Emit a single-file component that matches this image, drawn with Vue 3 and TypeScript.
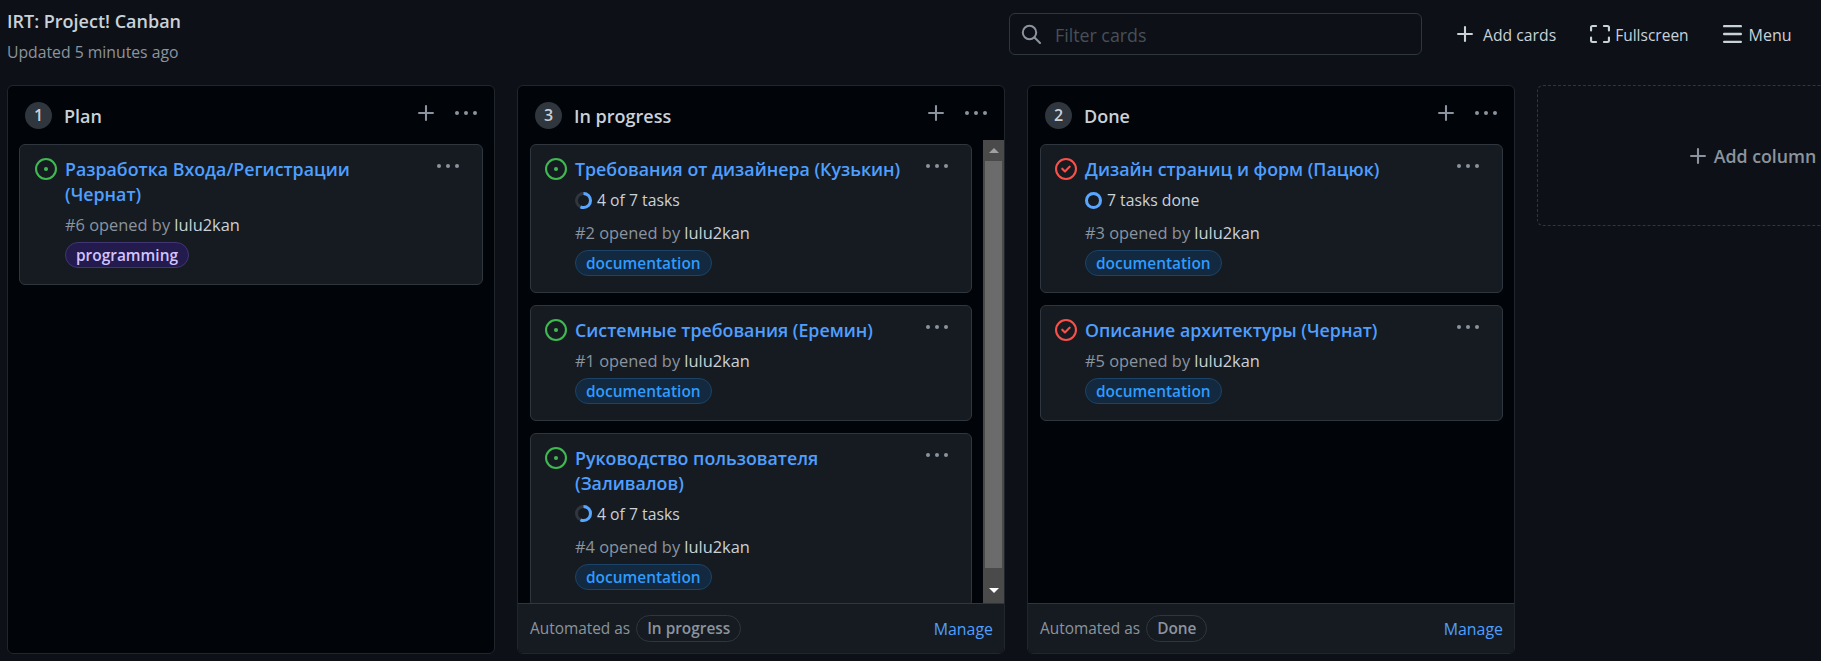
<script setup lang="ts">
interface Card {
  title: string[];
  num: number;
  tasks?: string;
  done?: boolean;
  closed?: boolean;
  label: "documentation" | "programming";
}
interface Column {
  name: string;
  count: number;
  cards: Card[];
  automated?: string;
  scroll?: boolean;
}
const columns: Column[] = [
  {
    name: "Plan",
    count: 1,
    cards: [
      { title: ["Разработка Входа/Регистрации", "(Чернат)"], num: 6, label: "programming" },
    ],
  },
  {
    name: "In progress",
    count: 3,
    automated: "In progress",
    scroll: true,
    cards: [
      { title: ["Требования от дизайнера (Кузькин)"], num: 2, tasks: "4 of 7 tasks", label: "documentation" },
      { title: ["Системные требования (Еремин)"], num: 1, label: "documentation" },
      { title: ["Руководство пользователя", "(Заливалов)"], num: 4, tasks: "4 of 7 tasks", label: "documentation" },
    ],
  },
  {
    name: "Done",
    count: 2,
    automated: "Done",
    cards: [
      { title: ["Дизайн страниц и форм (Пацюк)"], num: 3, tasks: "7 tasks done", done: true, closed: true, label: "documentation" },
      { title: ["Описание архитектуры (Чернат)"], num: 5, closed: true, label: "documentation" },
    ],
  },
];
</script>

<template>
  <div class="page">
    <header class="top">
      <div class="heading">
        <div class="project">IRT: Project! Canban</div>
        <div class="updated">Updated 5 minutes ago</div>
      </div>
      <div class="search">
        <svg width="20" height="20" viewBox="0 0 20 20" fill="none" stroke="#8b949e" stroke-width="2" stroke-linecap="round"><circle cx="8.5" cy="8.5" r="6.7" /><path d="M13.5 13.5 19 19" /></svg>
        <span class="placeholder">Filter cards</span>
      </div>
      <nav class="actions">
        <a class="action add">
          <svg width="16" height="16" viewBox="2 2 11.5 11.5" fill="#c9d1d9"><path d="M7.75 2a.75.75 0 0 1 .75.75V7h4.25a.75.75 0 0 1 0 1.5H8.5v4.25a.75.75 0 0 1-1.5 0V8.5H2.75a.75.75 0 0 1 0-1.5H7V2.75A.75.75 0 0 1 7.75 2Z" /></svg>
          <span>Add cards</span>
        </a>
        <a class="action full">
          <svg width="20" height="18" viewBox="1 1 14 14" preserveAspectRatio="none" fill="#c9d1d9"><path d="M1.75 10a.75.75 0 0 1 .75.75v2.5c0 .138.112.25.25.25h2.5a.75.75 0 0 1 0 1.5h-2.5A1.75 1.75 0 0 1 1 13.25v-2.5a.75.75 0 0 1 .75-.75Zm12.5 0a.75.75 0 0 1 .75.75v2.5A1.75 1.75 0 0 1 13.25 15h-2.5a.75.75 0 0 1 0-1.5h2.5a.25.25 0 0 0 .25-.25v-2.5a.75.75 0 0 1 .75-.75ZM2.75 2.5a.25.25 0 0 0-.25.25v2.5a.75.75 0 0 1-1.5 0v-2.5C1 1.784 1.784 1 2.75 1h2.5a.75.75 0 0 1 0 1.5ZM10 1.75a.75.75 0 0 1 .75-.75h2.5c.966 0 1.75.784 1.75 1.75v2.5a.75.75 0 0 1-1.5 0v-2.5a.25.25 0 0 0-.25-.25h-2.5a.75.75 0 0 1-.75-.75Z" /></svg>
          <span>Fullscreen</span>
        </a>
        <a class="action menu">
          <svg width="19" height="18" viewBox="1 2 14 11.5" preserveAspectRatio="none" fill="#c9d1d9"><path d="M1 2.75A.75.75 0 0 1 1.75 2h12.5a.75.75 0 0 1 0 1.5H1.75A.75.75 0 0 1 1 2.75Zm0 5A.75.75 0 0 1 1.75 7h12.5a.75.75 0 0 1 0 1.5H1.75A.75.75 0 0 1 1 7.75ZM1.75 12h12.5a.75.75 0 0 1 0 1.5H1.75a.75.75 0 0 1 0-1.5Z" /></svg>
          <span>Menu</span>
        </a>
      </nav>
    </header>

    <main class="board">
      <section v-for="col in columns" :key="col.name" class="column" :class="{ 'has-foot': col.automated }">
        <div class="col-head">
          <span class="count">{{ col.count }}</span>
          <span class="col-name">{{ col.name }}</span>
          <svg class="col-plus" width="16" height="16" viewBox="2 2 11.5 11.5" fill="#8b949e"><path d="M7.75 2a.75.75 0 0 1 .75.75V7h4.25a.75.75 0 0 1 0 1.5H8.5v4.25a.75.75 0 0 1-1.5 0V8.5H2.75a.75.75 0 0 1 0-1.5H7V2.75A.75.75 0 0 1 7.75 2Z" /></svg>
          <svg class="col-dots" width="22" height="4" viewBox="0 0 22 4" fill="#8b949e"><circle cx="2" cy="2" r="2" /><circle cx="11" cy="2" r="2" /><circle cx="20" cy="2" r="2" /></svg>
        </div>
        <div class="col-body">
          <div class="cards">
            <article v-for="card in col.cards" :key="card.num" class="card">
              <svg v-if="!card.closed" class="state" width="22" height="22" viewBox="0 0 16 16" fill="#3fb950"><path d="M8 9.5a1.5 1.5 0 1 0 0-3 1.5 1.5 0 0 0 0 3Z" /><path d="M8 0a8 8 0 1 1 0 16A8 8 0 0 1 8 0ZM1.5 8a6.5 6.5 0 1 0 13 0 6.5 6.5 0 0 0-13 0Z" /></svg>
              <svg v-else class="state" width="22" height="22" viewBox="0 0 16 16" fill="#f85149"><path d="M11.28 6.78a.75.75 0 0 0-1.06-1.06L7.25 8.69 5.78 7.22a.75.75 0 0 0-1.06 1.06l2 2a.75.75 0 0 0 1.06 0l3.5-3.5Z" /><path d="M16 8A8 8 0 1 1 0 8a8 8 0 0 1 16 0Zm-1.5 0a6.5 6.5 0 1 0-13 0 6.5 6.5 0 0 0 13 0Z" /></svg>
              <div class="card-main">
                <h3 class="card-title"><span v-for="line in card.title" :key="line" class="line">{{ line }}</span></h3>
                <div v-if="card.tasks" class="tasks">
                  <svg width="17" height="17" viewBox="0 0 17 17" fill="none" stroke-width="3">
                    <circle cx="8.5" cy="8.5" r="7" stroke="#30363d" />
                    <circle v-if="card.done" cx="8.5" cy="8.5" r="7" stroke="#58a6ff" />
                    <circle v-else cx="8.5" cy="8.5" r="7" stroke="#58a6ff" pathLength="7" stroke-dasharray="4 7" transform="rotate(-90 8.5 8.5)" />
                  </svg>
                  {{ card.tasks }}
                </div>
                <div class="meta">#{{ card.num }} opened by <span class="author">lulu2kan</span></div>
                <span class="label" :class="card.label">{{ card.label }}</span>
              </div>
              <svg class="card-dots" width="22" height="4" viewBox="0 0 22 4" fill="#8b949e"><circle cx="2" cy="2" r="2" /><circle cx="11" cy="2" r="2" /><circle cx="20" cy="2" r="2" /></svg>
            </article>
          </div>
          <div v-if="col.scroll" class="scrollbar">
            <div class="sb-btn"><i class="arrow up"></i></div>
            <div class="sb-thumb"></div>
            <div class="sb-end"><i class="arrow down"></i></div>
          </div>
        </div>
        <footer v-if="col.automated" class="col-foot">
          <span class="auto">Automated as</span>
          <span class="pill">{{ col.automated }}</span>
          <a class="manage">Manage</a>
        </footer>
      </section>
      <section class="add-col">
        <svg width="16" height="16" viewBox="2 2 11.5 11.5" fill="#8b949e"><path d="M7.75 2a.75.75 0 0 1 .75.75V7h4.25a.75.75 0 0 1 0 1.5H8.5v4.25a.75.75 0 0 1-1.5 0V8.5H2.75a.75.75 0 0 1 0-1.5H7V2.75A.75.75 0 0 1 7.75 2Z" /></svg>
        <span>Add column</span>
      </section>
    </main>
  </div>
</template>

<style>
html, body { margin: 0; background: #0d1117; overflow: hidden; }
</style>

<style scoped>
.page {
  width: 1821px;
  height: 661px;
  overflow: hidden;
  display: flex;
  flex-direction: column;
  background: #0d1117;
  color: #c9d1d9;
  font-family: "Open Sans", "Noto Sans", sans-serif;
  font-size: 16px;
  box-sizing: border-box;
}
.top {
  height: 85px;
  flex: none;
  display: flex;
  align-items: flex-start;
  padding-left: 7px;
  box-sizing: border-box;
}
.heading { width: 1002px; flex: none; padding-top: 9px; }
.project { font-size: 18px; font-weight: 600; line-height: 24px; color: #c9d1d9; white-space: nowrap; }
.updated { font-size: 15.75px; line-height: 24px; color: #8b949e; margin-top: 7px; }
.search {
  flex: none;
  width: 413px;
  height: 42px;
  margin-top: 13px;
  box-sizing: border-box;
  border: 1px solid #30363d;
  border-radius: 6px;
  display: flex;
  align-items: center;
  padding-left: 11px;
  gap: 14px;
  color: #484f58;
  font-size: 17.8px;
}
.placeholder { padding-top: 2px; }
.actions { display: flex; margin-top: 13px; height: 42px; align-items: center; margin-left: 35px; }
.action { display: flex; align-items: center; font-size: 15.75px; color: #c9d1d9; white-space: nowrap; }
.action span { padding-top: 2px; }
.add { gap: 10px; margin-right: 34px; }
.full { gap: 5px; margin-right: 34px; font-size: 15.5px; }
.menu { gap: 7px; font-size: 16px; }
.board { flex: 1; min-height: 0; display: flex; gap: 22px; padding: 0 0 7px 7px; }
.column {
  width: 488px;
  flex: none;
  box-sizing: border-box;
  border: 1px solid #21262d;
  border-radius: 6px;
  background: #010409;
  display: flex;
  flex-direction: column;
  overflow: hidden;
}
.col-head { flex: none; height: 58px; display: flex; align-items: center; padding: 0 17px; }
.count {
  width: 27px;
  height: 27px;
  border-radius: 50%;
  background: #30363d;
  color: #c9d1d9;
  font-size: 16px;
  font-weight: 600;
  display: flex;
  align-items: center;
  justify-content: center;
  margin-right: 12px;
}
.col-name { flex: 1; font-size: 18px; font-weight: 600; color: #c9d1d9; padding-top: 2px; }
.col-plus { margin-right: 21px; margin-top: -5px; }
.col-dots { margin-top: -5px; }
.col-body { flex: 1; min-height: 0; display: flex; }
.cards { flex: 1; min-width: 0; padding: 0 11px; display: flex; flex-direction: column; gap: 12px; overflow: hidden; }
.has-foot .cards { padding-left: 12px; }
.card {
  flex: none;
  display: flex;
  align-items: flex-start;
  background: #161b22;
  border: 1px solid #30363d;
  border-radius: 6px;
  padding: 12px 23px 16px 15px;
  box-sizing: border-box;
}
.has-foot .card { padding-left: 14px; }
.state { flex: none; margin-right: 8px; margin-top: 1px; }
.card-main { flex: 1; min-width: 0; }
.card-title { margin: 0; font-size: 17.8px; font-weight: 600; line-height: 24.5px; color: #4f9fff; }
.line { display: block; white-space: nowrap; }
.tasks { display: flex; align-items: center; gap: 5px; font-size: 15.75px; color: #c9d1d9; height: 24px; margin-top: 6.5px; }
.tasks + .meta { margin-top: 9px; }
.meta { font-size: 16.4px; line-height: 24px; color: #8b949e; margin-top: 6.5px; }
.author { color: #c9d1d9; }
.label {
  display: block;
  width: fit-content;
  box-sizing: border-box;
  margin-top: 5px;
  font-size: 15.45px;
  font-weight: 600;
  line-height: 24px;
  padding: 0 10px;
  border-radius: 13px;
  border: 1px solid;
}
.label.documentation { color: #2f9bff; background: #12293f; border-color: #1b4468; }
.label.programming { color: #d3c3ff; background: #231a4d; border-color: #413672; }
.card-dots { flex: none; margin-top: 7px; }
.scrollbar { flex: none; width: 21px; margin-top: -4px; background: #4a4a4a; display: flex; flex-direction: column; align-items: stretch; }
.sb-btn { height: 21px; display: flex; align-items: center; justify-content: center; }
.sb-thumb { flex: 1; margin: 0 2px; background: #6b6b6b; }
.sb-end { height: 35px; display: flex; justify-content: center; padding-top: 20px; box-sizing: border-box; }
.arrow { width: 0; height: 0; border-left: 5px solid transparent; border-right: 5px solid transparent; }
.arrow.up { border-bottom: 5px solid #a0a0a0; }
.arrow.down { border-top: 5px solid #ffffff; }
.col-foot {
  flex: none;
  height: 50px;
  box-sizing: border-box;
  border-top: 1px solid #30363d;
  background: #161b22;
  display: flex;
  align-items: center;
  padding: 0 11px 0 12px;
  font-size: 15.4px;
}
.auto { color: #8b949e; }
.pill {
  margin-left: 6px;
  height: 27px;
  box-sizing: border-box;
  border: 1px solid #30363d;
  border-radius: 14px;
  padding: 0 10px;
  display: flex;
  align-items: center;
  font-weight: 600;
  color: #8b949e;
}
.manage { margin-left: auto; color: #4f9fff; font-size: 15.9px; }
.add-col {
  width: 431px;
  height: 141px;
  flex: none;
  box-sizing: border-box;
  border: 1px dashed #30363d;
  border-right: none;
  border-radius: 6px 0 0 6px;
  display: flex;
  align-items: center;
  justify-content: center;
  gap: 8px;
  font-size: 17.8px;
  font-weight: 600;
  color: #8b949e;
  white-space: nowrap;
}
</style>
